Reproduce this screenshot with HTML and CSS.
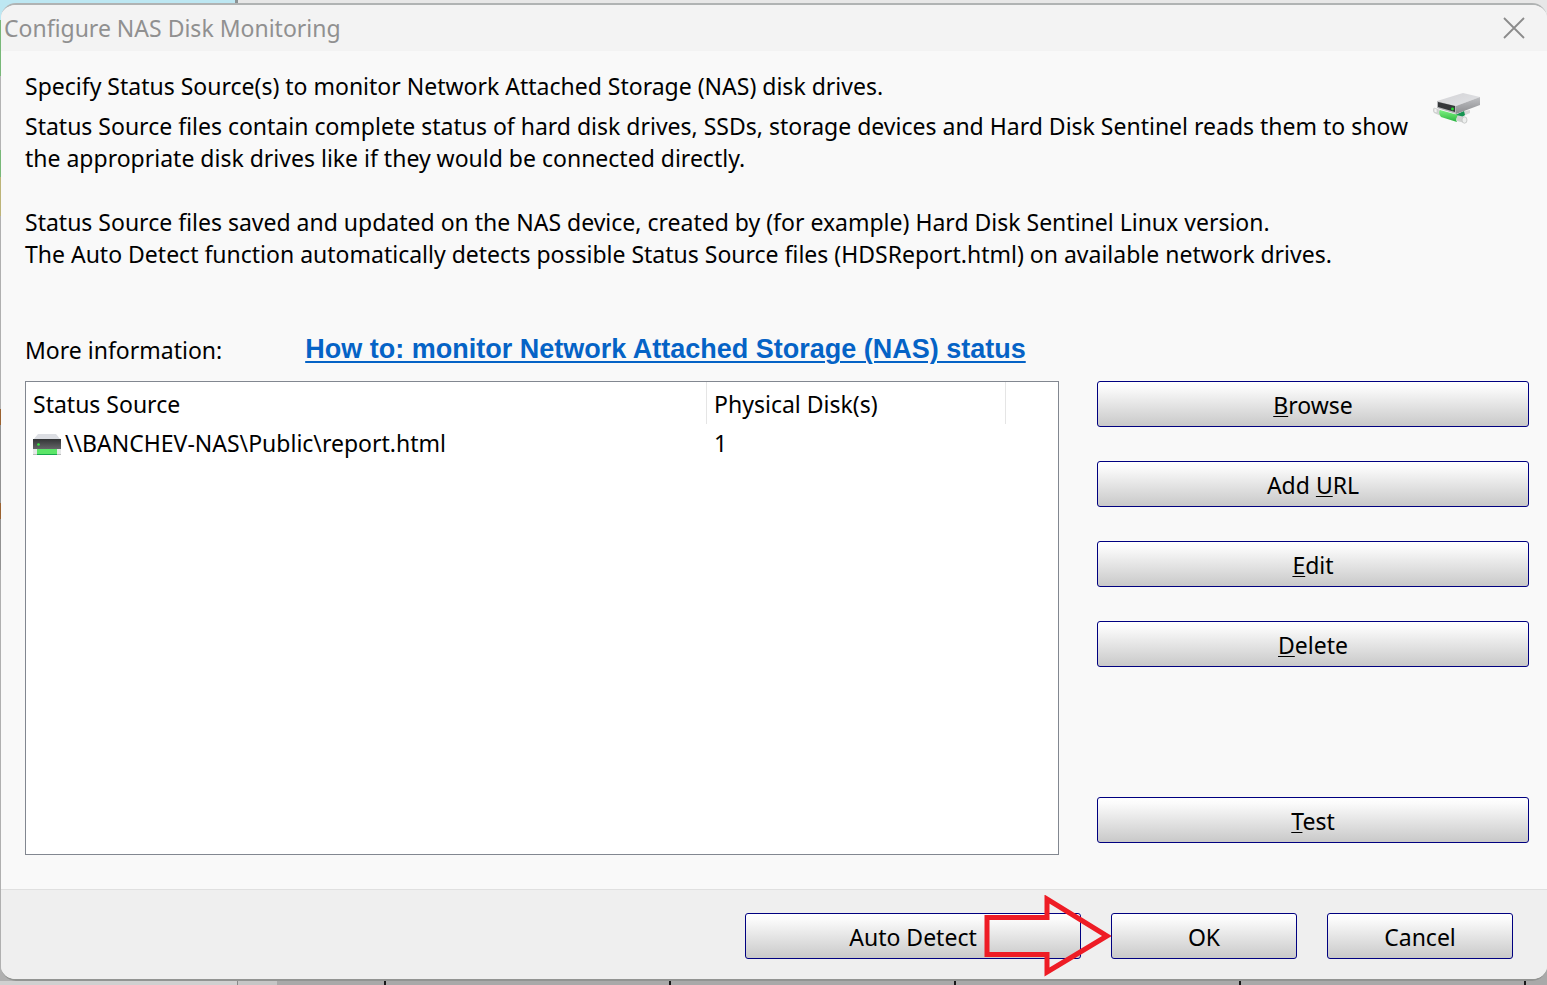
FILE: index.html
```html
<!DOCTYPE html>
<html lang="en">
<head>
<meta charset="utf-8">
<meta name="viewport" content="width=device-width, initial-scale=1">
<title>Configure NAS Disk Monitoring</title>
<link rel="stylesheet" href="styles.css">
</head>
<body>
<main class="dialog" role="dialog" aria-labelledby="dialog-title">
  <header class="titlebar">
    <h1 class="title" id="dialog-title">Configure NAS Disk Monitoring</h1>
    <button class="close" type="button" aria-label="Close">
      <svg width="22" height="22" viewBox="0 0 22 22"><path d="M1 1 21 21M21 1 1 21" stroke="#8b8b8b" stroke-width="1.8" fill="none"/></svg>
    </button>
  </header>

  <section class="content">
    <div class="intro">
      <div class="intro-text">
        <p class="lead">Specify Status Source(s) to monitor Network Attached Storage (NAS) disk drives.</p>
        <p class="para">Status Source files contain complete status of hard disk drives, SSDs, storage devices and Hard Disk Sentinel reads them to show<br>the appropriate disk drives like if they would be connected directly.</p>
        <p class="para">Status Source files saved and updated on the NAS device, created by (for example) Hard Disk Sentinel Linux version.<br>The Auto Detect function automatically detects possible Status Source files (HDSReport.html) on available network drives.</p>
      </div>
      <svg class="nas-icon" width="48" height="32" viewBox="0 0 48 32" aria-hidden="true">
        <defs>
          <linearGradient id="top" x1="0" y1="0" x2="1" y2="1"><stop offset="0" stop-color="#d3d3d6"/><stop offset="1" stop-color="#e2e3e6"/></linearGradient>
          <linearGradient id="side" x1="0" y1="0" x2="0" y2="1"><stop offset="0" stop-color="#bfc0c3"/><stop offset="1" stop-color="#8b8c8f"/></linearGradient>
          <linearGradient id="green" x1="0" y1="0" x2="0" y2="1"><stop offset="0" stop-color="#7df285"/><stop offset=".5" stop-color="#54d35e"/><stop offset="1" stop-color="#25b23f"/></linearGradient>
        </defs>
        <path d="M22 22 32 18 37 17 37 20 24 26Z" fill="#d6d7d7"/>
        <path d="M22 22 31 18 32 22 25 27Z" fill="#159451"/>
        <path d="M1 15 8 17 8 23 1 20Q-1 17 1 15Z" fill="#d2d4d3"/>
        <path d="M1 15 4 16 4 20 1 19Z" fill="#f2f3f2" stroke="#c6c8c7" stroke-width=".6"/>
        <path d="M23 22 32 24 32 30 24 28Z" fill="#cfd1d0"/>
        <ellipse cx="31.500" cy="27" rx="2.500" ry="3.200" fill="#edefee" stroke="#bfc1c0" stroke-width=".8"/>
        <path d="M7 17 25 22Q22 26 24 29L8 24Q5 20 7 17Z" fill="url(#green)"/>
        <path d="M4 8 30 0 47 4 23 13Z" fill="url(#top)"/>
        <path d="M23 13 47 4 47 12 23 21Z" fill="url(#side)"/>
        <path d="M4 8 23 13 23 21 4 15Z" fill="#b6b7b9"/>
        <path d="M5 9 22 13 22 19 5 14Z" fill="#35383a"/>
        <circle cx="19.500" cy="16" r="1.400" fill="#27df32"/>
      </svg>
    </div>

    <div class="more">
      <span class="more-label">More information:</span>
      <a class="more-link" href="#howto">How to: monitor Network Attached Storage (NAS) status</a>
    </div>

    <div class="workspace">
      <div class="list">
        <table class="sources">
          <thead>
            <tr><th class="col-source" scope="col">Status Source</th><th class="col-disks" scope="col">Physical Disk(s)</th><td class="col-rest"></td></tr>
          </thead>
          <tbody>
            <tr>
              <td><div class="source"><svg class="drive" width="28" height="22" viewBox="0 0 28 22" aria-hidden="true">
                <defs><linearGradient id="front" x1="0" y1="0" x2="0" y2="1"><stop offset="0" stop-color="#333536"/><stop offset="1" stop-color="#646668"/></linearGradient></defs>
                <path d="M5 0H23L28 6H0Z" fill="#dcdee3"/>
                <rect y="5" width="28" height="10" fill="url(#front)"/>
                <circle cx="5.500" cy="10.500" r="1.300" fill="#36ec42"/>
                <rect y="15" width="28" height="5" fill="#e6e8e8"/><path d="M0 20.500H28" stroke="#b9bbbb"/>
                <rect x="4" y="15" width="20" height="6" fill="#5be568"/><path d="M4 20.500H24" stroke="#16a84b"/>
              </svg><span>\\BANCHEV-NAS\Public\report.html</span></div></td>
              <td>1</td><td></td>
            </tr>
          </tbody>
        </table>
      </div>
      <div class="actions">
        <button class="btn" type="button"><span class="key">B</span>rowse</button>
        <button class="btn" type="button">Add <span class="key">U</span>RL</button>
        <button class="btn" type="button"><span class="key">E</span>dit</button>
        <button class="btn" type="button"><span class="key">D</span>elete</button>
        <button class="btn btn-test" type="button"><span class="key">T</span>est</button>
      </div>
    </div>
  </section>

  <footer class="footer">
    <button class="btn btn-wide" type="button">Auto Detect</button>
    <div class="confirm">
      <button class="btn btn-small" type="button">OK</button>
      <svg class="arrow" width="128" height="82" viewBox="0 0 128 82" aria-hidden="true"><path d="M4 22.500H64V4L124 41 64 77V59.500H4Z" fill="none" stroke="#ee1c25" stroke-width="5"/></svg>
    </div>
    <button class="btn btn-small" type="button">Cancel</button>
  </footer>
</main>
<div class="behind" aria-hidden="true">
  <span class="behind-side"></span>
  <span class="behind-split"></span>
  <span class="behind-main"></span>
</div>
</body>
</html>
```
FILE: styles.css
```css
* {
  box-sizing: border-box;
}

body {
  margin: 0;
  min-height: 100vh;
  display: flex;
  flex-direction: column;
  padding-top: 3px;
  font-family: "Segoe UI", "Noto Sans", sans-serif;
  font-size: 23px;
  line-height: 32px;
  color: #000;
  background:
    linear-gradient(90deg, #bde7f2 235px, #8c9294 235px 238px, #e7e7e7 238px) top / 100% 20px no-repeat,
    linear-gradient(#a9a9a9, #a9a9a9) right bottom / 40px 30px no-repeat,
    linear-gradient(#78b878 0 76px, #b4b4b4 76px 150px, #78b878 150px 177px, #bdb478 177px 216px, #b0b0b0 216px 409px, #9b6230 409px 425px, #929292 425px 503px, #9b6230 503px 519px, #929292 519px 570px, #b0b0b0 570px);
}

.dialog {
  flex: 1;
  display: flex;
  flex-direction: column;
  margin-left: 1px;
  border-top: 2px solid #b0b3b3;
  border-bottom: 2px solid #929492;
  border-radius: 15px;
  background: #f9f9f9;
  overflow: hidden;
}

.titlebar {
  display: flex;
  align-items: center;
  justify-content: space-between;
  height: 46px;
  padding: 0 22px 0 3px;
  background: #f3f3f3;
}

.title {
  margin: 0;
  font-size: 23px;
  font-weight: 400;
  color: #909090;
}

.close {
  display: flex;
  padding: 0;
  border: 0;
  background: none;
}

.content {
  flex: 1;
  display: flex;
  flex-direction: column;
  padding: 19px 18px 34px 24px;
}

.intro {
  display: flex;
  justify-content: space-between;
}

.lead {
  margin: 0 0 8px;
}

.para {
  margin: 0 0 32px;
  white-space: nowrap;
}

.nas-icon {
  flex: none;
  margin: 23px 48px 0 0;
}

.more {
  display: flex;
  gap: 83px;
  margin: 32px 0 15px;
}

.more-link {
  font: bold 27px/30px "Liberation Sans", Arial, sans-serif;
  color: #0563c6;
  text-decoration-thickness: 2px;
  text-underline-offset: 3px;
}

.workspace {
  flex: 1;
  display: flex;
  gap: 38px;
}

.list {
  flex: 1;
  border: 1px solid #828790;
  background: #fff;
}

.sources {
  width: 100%;
  table-layout: fixed;
  border-collapse: collapse;
}

.sources th,
.sources td {
  height: 34px;
  padding: 0 7px;
  text-align: left;
  font-weight: 400;
}

.sources thead th,
.sources thead td {
  height: 44px;
  background: linear-gradient(#e5e5e5, #e5e5e5) right top / 1px 42px no-repeat;
}

.sources thead .col-rest {
  background: none;
}

.col-source {
  width: 66%;
}

.col-disks {
  width: 29%;
}

.source {
  display: flex;
  align-items: center;
  gap: 4px;
}

.drive {
  flex: none;
  margin-top: 4px;
}

.actions {
  flex: none;
  width: 432px;
  display: flex;
  flex-direction: column;
  gap: 34px;
  padding-bottom: 12px;
}

.btn {
  height: 46px;
  padding: 2px 12px 0;
  border: 1px solid #000080;
  border-radius: 3px;
  background: linear-gradient(#fff, #fbfbfb 12%, #c9c9c9);
  font: inherit;
  color: #000;
}

.key {
  text-decoration: underline;
  text-decoration-thickness: 1px;
  text-underline-offset: 2px;
}

.btn-test {
  margin-top: auto;
}

.footer {
  display: flex;
  justify-content: flex-end;
  gap: 30px;
  padding: 23px 34px 20px;
  border-top: 1px solid #e0e0e0;
  background: #efefef;
}

.btn-wide {
  width: 336px;
}

.btn-small {
  width: 186px;
}

.confirm {
  position: relative;
}

.arrow {
  position: absolute;
  left: -128px;
  top: -18px;
  pointer-events: none;
}

.behind {
  display: flex;
  height: 4px;
}

.behind-side {
  width: 237px;
  background: #d0d0d0;
}

.behind-split {
  width: 40px;
  border-left: 1px solid #888;
  background: #c6c6c6;
}

.behind-main {
  flex: 1;
  background: repeating-linear-gradient(90deg, #a9a9a9 0 107px, #181818 107px 109px, #a9a9a9 109px 285px);
}
```
